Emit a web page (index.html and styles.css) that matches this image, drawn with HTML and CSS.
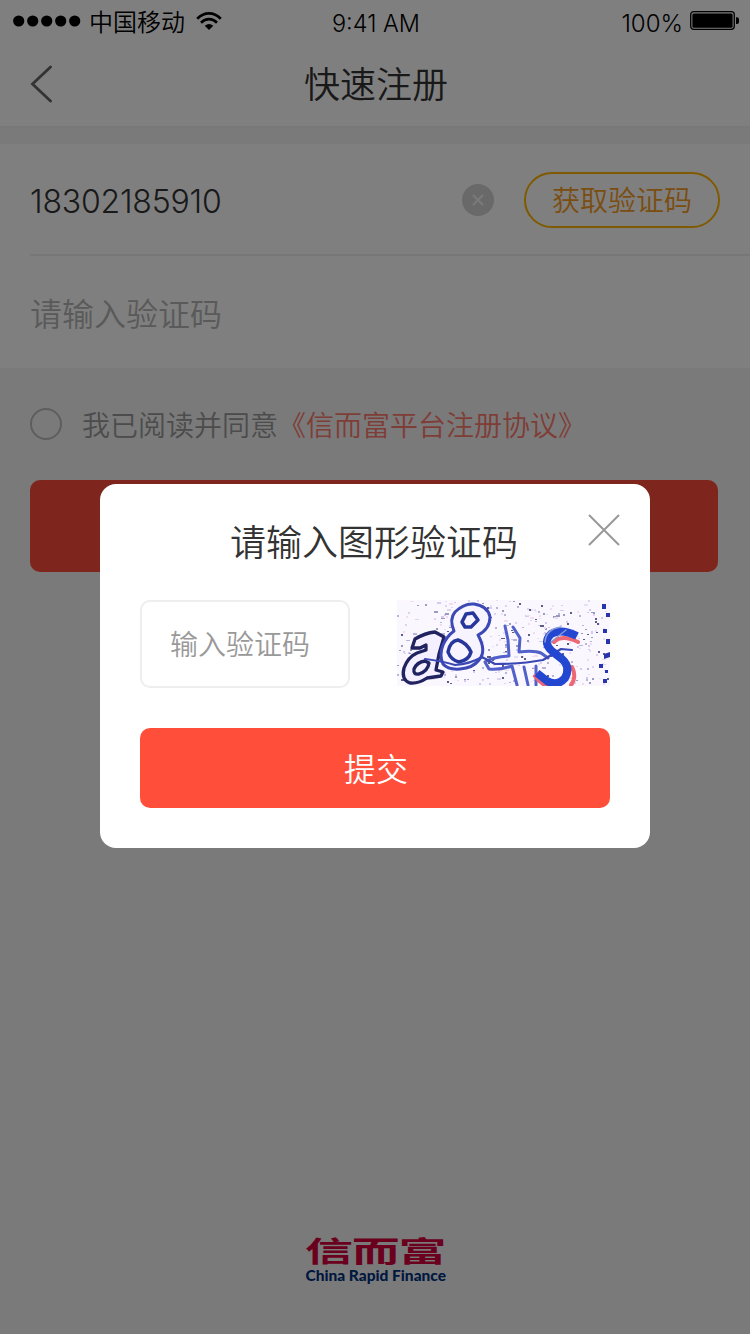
FILE: index.html
```html
<!DOCTYPE html>
<html lang="zh-CN">
<head>
<meta charset="utf-8">
<title>快速注册</title>
<link rel="stylesheet" href="styles.css">
</head>
<body>
<div class="screen">
  <header class="header">
    <div class="status">
      <div class="status-left">
        <svg class="signal" width="68" height="12" viewBox="0 0 68 12"><circle cx="5.7" cy="6" r="5.6"/><circle cx="19.7" cy="6" r="5.6"/><circle cx="33.7" cy="6" r="5.6"/><circle cx="47.7" cy="6" r="5.6"/><circle cx="61.7" cy="6" r="5.6"/></svg>
        <span class="carrier">中国移动</span>
        <svg class="wifi" width="26" height="18" viewBox="0 0 26 18"><g fill="none" stroke="#000" stroke-width="2.7"><path d="M1.2 6.7Q6.5 1.4 13 1.4T24.8 6.7"/><path d="M5 10.8Q8.5 7.2 13 7.2T21 10.8"/></g><path d="M8.7 13.7Q13 10.3 17.3 13.7L13 18Z"/></svg>
      </div>
      <span class="time">9:41 AM</span>
      <div class="status-right">
        <span class="percent">100%</span>
        <svg class="battery" width="49" height="20" viewBox="0 0 49 20"><rect x=".7" y=".7" width="43.6" height="17.6" rx="3" fill="none" stroke="#000" stroke-width="1.3"/><rect x="2.4" y="2.4" width="40.2" height="14.4" rx="1.5"/><path d="M46 6.2h1q2 0 2 2v2.800q0 2-2 2h-1z"/></svg>
      </div>
    </div>
    <nav class="nav">
      <svg class="back" width="22" height="38" viewBox="0 0 22 38"><path d="M20.500 2L2.500 19l18 17" fill="none" stroke="#666" stroke-width="2.800" stroke-linecap="round"/></svg>
      <h1 class="title">快速注册</h1>
    </nav>
  </header>
  <section class="form">
    <div class="row phone-row">
      <span class="phone">18302185910</span>
      <svg class="clear" width="32" height="32" viewBox="0 0 32 32"><circle cx="16" cy="16" r="16" fill="#d2d2d2"/><path d="M11 11l10 10M21 11L11 21" stroke="#f5f5f5" stroke-width="2"/></svg>
      <button class="get-code">获取验证码</button>
    </div>
    <div class="row"><span class="placeholder">请输入验证码</span></div>
  </section>
  <div class="agree"><i class="radio"></i><span>我已阅读并同意</span><span class="link">《信而富平台注册协议》</span></div>
  <div class="next"></div>
  <footer class="logo">
    <svg width="144" height="72" viewBox="0 -12 144 72">
      <g class="logo-cn"><text transform="translate(1 26.300) scale(1.6 .94)" textLength="88.500">信而富</text></g>
      <text class="logo-en" x="1.500" y="45" textLength="140.500" lengthAdjust="spacingAndGlyphs">China Rapid Finance</text>
    </svg>
  </footer>
  <div class="mask">
    <section class="modal">
      <h2 class="modal-title">请输入图形验证码</h2>
      <svg class="close" width="32" height="32" viewBox="0 0 32 32"><path d="M1 1l30 30M31 1L1 31" stroke="#999" stroke-width="2"/></svg>
      <div class="captcha-row">
        <div class="code-input">输入验证码</div>
        <svg class="captcha" width="213" height="86" viewBox="0 0 213 86">
          <rect width="213" height="86" fill="#faf7ff"/>
          <g id="noise"></g>
          <g fill="none" stroke-linejoin="round" stroke-linecap="round">
            <path d="M15 48L18 39Q28 33 38 32L47 37L42 54L39 70L46 72L44 76L30 78Q21 84 13 83Q4 80 7 68Q11 57 20 53L29 50L29 45L23 48ZM17 69Q20 62 28 61L32 63Q31 71 22 74Q16 75 17 69Z" fill="#f5f0ff" stroke="#20235f" stroke-width="3.300"/>
            <path d="M57 31Q52 19 58 12Q67 3 77 4Q91 6 93 17Q93 29 81 35Q90 51 82 60Q76 68 63 69Q51 70 46 64Q42 55 46 45Q50 36 57 31Z" fill="#f8f4ff" stroke="#3b48b5" stroke-width="3"/>
            <path d="M65 22L69 14L76 13L81 20L74 27L68 27ZM51 52Q53 41 61 40Q70 43 74 52Q72 60 62 62Q54 60 51 52Z" stroke="#26369a" stroke-width="3.500"/>
            <path d="M108 26L111 40L112 56Q95 57 88 62L92 69Q103 70 115 66L120 85M116 27L123 38L122 52Q137 50 144 53L151 58M127 67L131 85M139 66L139 85" stroke="#5260ca" stroke-width="3"/>
            <path d="M28 59Q45 61 58 65Q73 64 85 57L98 64Q125 64 146 60L164 49L175 50" stroke="#3948b3" stroke-width="2.200"/>
            <path d="M181 42Q165 34 157 42M175 67Q180 77 174 85M138 76Q144 84 150 86" stroke="#ed6874" stroke-width="4"/>
            <path d="M180 36Q164 28 154 34Q145 43 156 52L165 59Q174 67 168 78Q160 87 150 81L140 73" stroke="#2347d1" stroke-width="8" stroke-linecap="butt"/>
            <path d="M148 42Q149 29 164 27M154 42L169 30" stroke="#8a9ad8" stroke-width="1.500"/>
          </g>
          <path d="M205 4h4v5h-4zM209 13h4v4h-4zM206 29h4v4h-4zM209 39h4v5h-4zM207 54l6-2v5l-6 2zM202 64h4v4h-4zM208 70h3v3h-3zM206 79h4v4h-4z" fill="#2734ad"/>
        </svg>
      </div>
      <button class="submit">提交</button>
    </section>
  </div>
</div>
<script src="noise.js"></script>
</body>
</html>
```
FILE: styles.css
```css
* { box-sizing: border-box; }
body { margin: 0; font-family: Inter, "Noto Sans CJK SC", sans-serif; font-weight: 350; }
button { font: inherit; padding: 0; border: 0; background: none; }
h1, h2 { margin: 0; font-weight: 350; }
svg { display: block; flex: none; }
.screen { position: relative; width: 750px; height: 1334px; overflow: hidden; background: #f5f5f5; display: flex; flex-direction: column; }
.header { height: 128px; background: #fff; border-bottom: 2px solid #f0f0f0; }
.status { height: 40px; display: grid; grid-template-columns: 1fr auto 1fr; align-items: center; padding: 0 11px 0 13px; color: #000; font-size: 23px; line-height: 36px; }
.status-left { display: flex; align-items: center; }
.carrier { font-size: 24px; margin: 0 11px 0 8px; padding-top: 3px; }
.time { padding-top: 6px; font-size: 23.5px; }
.status-right { display: flex; align-items: center; justify-content: flex-end; }
.percent { padding-top: 6px; margin-right: 7px; font-size: 24px; }
.nav { height: 86px; display: grid; grid-template-columns: 22px 1fr 22px; align-items: center; padding: 2px 30px 0; }
.title { text-align: center; font-size: 36px; line-height: 50px; color: #333; padding: 2px 0 0 2px; }
.form { margin-top: 16px; height: 224px; background: #fff; padding-left: 30px; }
.row { height: 112px; display: flex; align-items: center; font-size: 32px; }
.phone-row { border-bottom: 2px solid #eee; padding: 2px 30px 0 0; }
.phone { flex: 1; color: #333; letter-spacing: -.2px; padding-top: 2px; }
.get-code { width: 196px; height: 56px; margin-left: 30px; border: 2px solid #ffb400; border-radius: 28px; color: #f59b23; font-size: 28px; line-height: 55px; }
.placeholder { color: #b4b4b4; }
.agree { height: 112px; display: flex; align-items: center; padding-left: 30px; font-size: 28px; color: #999; }
.radio { width: 32px; height: 32px; border: 2px solid #bbb; border-radius: 50%; margin-right: 20px; }
.link { color: #ff7a6e; }
.next { width: 688px; height: 92px; margin-left: 30px; border-radius: 10px; background: #fc4d3a; }
.logo { margin-top: auto; display: flex; justify-content: center; padding: 0 0 38px 2px; }
.logo-cn { font: 700 30px "Noto Sans CJK SC", sans-serif; fill: #d4003c; }
.logo-en { font: 900 14.5px Lato, sans-serif; fill: #003080; }
.mask { position: absolute; inset: 0; background: rgba(0, 0, 0, .5); display: flex; align-items: flex-start; justify-content: center; padding-top: 484px; }
.modal { position: relative; width: 550px; height: 364px; padding: 32px 40px 40px; border-radius: 16px; background: #fff; display: flex; flex-direction: column; }
.modal-title { text-align: center; font-size: 36px; line-height: 54px; color: #333; padding-right: 2px; }
.close { position: absolute; top: 30px; right: 30px; }
.captcha-row { display: flex; justify-content: space-between; margin-top: 30px; height: 88px; }
.code-input { width: 210px; height: 88px; border: 2px solid #eee; border-radius: 10px; padding-left: 28px; font-size: 28px; line-height: 87px; color: #999; }
.submit { margin-top: 40px; height: 80px; border-radius: 10px; background: #ff4f3b; color: #fff; font-size: 32px; line-height: 80px; padding: 2px 0 0 2px; }
```
FILE: noise.js
```js
// Speckle for the captcha background, seeded so it is the same on each load.
let seed = 47;
const random = () => (seed = (seed * 16807) % 2147483647) / 2147483647;
const colors = ['#b6b6dc', '#dcd5f2', '#9a9cbf', '#d3c9f2', '#5a5d88', '#f3dcef', '#e6dffa'];
let dots = '';
for (let i = 0; i < 380; i++) {
  const x = Math.floor(random() * 211), y = Math.floor(random() * 84);
  const w = random() > .85 ? 4 : 2;
  dots += `<rect x="${x}" y="${y}" width="${w}" height="${random() > .4 ? 2 : 1}" fill="${colors[i % 7]}"/>`;
}
document.getElementById('noise').innerHTML = dots;
```
